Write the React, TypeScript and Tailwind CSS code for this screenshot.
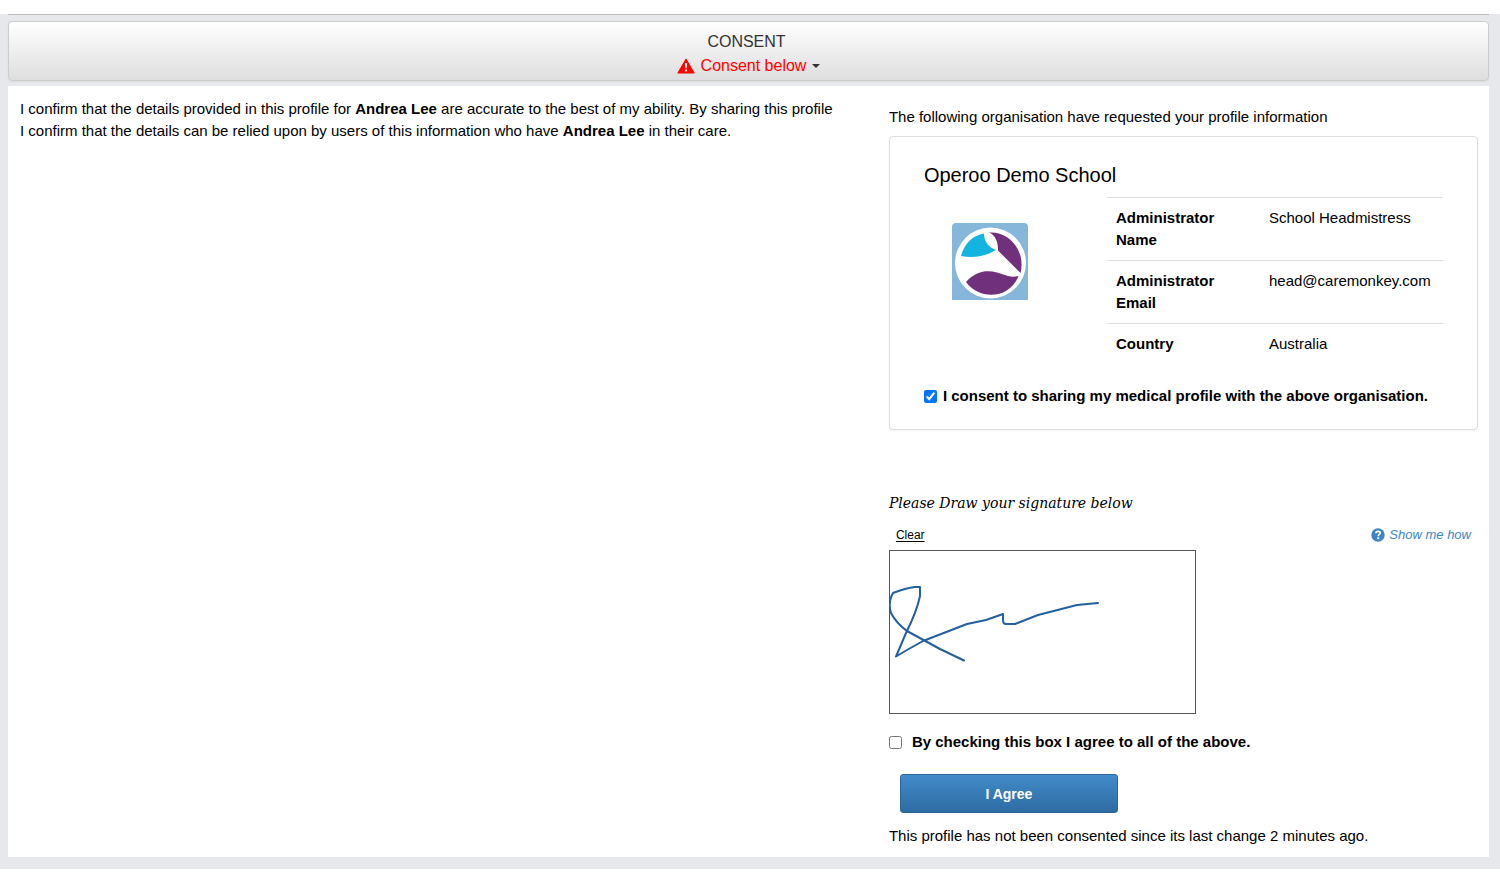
import React from "react";

const details = [
  { label: "Administrator Name", value: "School Headmistress" },
  { label: "Administrator Email", value: "head@caremonkey.com" },
  { label: "Country", value: "Australia" },
];

const WarningIcon: React.FC = () => (
  <svg viewBox="0 0 18 16" className="w-[18px] h-4" aria-hidden="true">
    <path d="M9 1.2 17 15H1Z" fill="#f00" stroke="#f00" strokeWidth="1.2" strokeLinejoin="round" />
    <path d="M7.8 5.2h2.4l-.5 5H8.3ZM7.9 11.4h2.2v2H7.9Z" fill="#fff" />
  </svg>
);

const HelpIcon: React.FC = () => (
  <svg viewBox="0 0 14 14" className="w-3.5 h-3.5" aria-hidden="true">
    <circle cx="7" cy="7" r="6.7" fill="#3d85c6" />
    <path d="M4.9 5.3C4.9 3.9 5.8 3.3 7.1 3.3S9.3 4 9.3 5.1C9.3 6.5 7.2 6.4 7.2 8.2" fill="none" stroke="#fff" strokeWidth="1.7" />
    <path d="M6.2 9.3h2v1.8h-2Z" fill="#fff" />
  </svg>
);

const SchoolLogo: React.FC = () => (
  <svg viewBox="0 0 76 77" className="w-[76px] h-[77px]" role="img" aria-label="Operoo Demo School logo">
    <path d="M4 0h68q4 0 4 4v73H0V4q0-4 4-4Z" fill="#86b7da" />
    <circle cx="38.5" cy="40" r="35.5" fill="#fff" />
    <path d="M9 33C12 21 21 12 32 10.5C32 18 36 24 44 27C33 34 20 35 9 33Z" fill="#14b4e1" />
    <path d="M37 9.5C58 8 74 29 68.5 50L46 27.5C46 18 43 12 37 9.5Z" fill="#71307b" />
    <path d="M14 59C29 43 43 49 53 52C58 54 62 54 66.5 53C57 77 27 77 14 59Z" fill="#71307b" />
  </svg>
);

const Signature: React.FC = () => (
  <svg
    viewBox="0 0 305 162"
    className="block w-full h-[162px]"
    fill="none"
    stroke="#245f9f"
    strokeWidth="2"
    strokeLinecap="round"
    strokeLinejoin="round"
    role="img"
    aria-label="Signature"
  >
    <path d="M74 109.5 50 98 17 80C9 74 4 68 1 62Q-2 52 2 44L3 42Q16 37 25 36H30V45Q27 60 16 82L6 105.5L17 99 33 90 77 73 96 69 113 63V69Q113 73 116 73H125L148 64 187 54 208 52" />
  </svg>
);

const App: React.FC = () => {
  return (
    <div className="bg-white pt-3.5 font-['Liberation_Sans',Arial,sans-serif] text-[15px] leading-[22px] text-black">
      <main className="bg-[#e7e8ec] pl-2 pr-[11px] pb-3">
        <div className="border-t border-[#bbb] pt-1.5">
          <button
            type="button"
            className="flex w-full flex-col items-center rounded border border-[#ccc] bg-linear-to-b from-white to-[#dedede] pt-2 pb-0.5 text-base leading-6 text-[#333] shadow-xs"
          >
            <span className="pr-1">CONSENT</span>
            <span className="flex items-center gap-1.5 text-[#f00]">
              <WarningIcon />
              Consent below
              <span className="border-x-4 border-t-4 border-x-transparent border-t-[#333]" />
            </span>
          </button>
        </div>

        <section className="mt-[5px] grid grid-cols-[minmax(0,7fr)_minmax(0,5fr)] bg-white pb-2.5">
          <p className="pl-3 pr-8 pt-3">
            I confirm that the details provided in this profile for <b>Andrea Lee</b> are accurate to the best
            of my ability. By sharing this profile I confirm that the details can be relied upon by users of
            this information who have <b>Andrea Lee</b> in their care.
          </p>

          <div className="pl-[17px] pr-[11px] pt-5">
            <p>The following organisation have requested your profile information</p>

            <div className="mt-2 rounded border border-[#ddd] px-[34px] pt-6 pb-[21px] shadow-xs">
              <h2 className="text-xl leading-7">Operoo Demo School</h2>
              <div className="mt-2 flex">
                <div className="flex-1 pl-7 pt-[26px]">
                  <SchoolLogo />
                </div>
                <table className="w-[336px] table-fixed border-collapse text-left">
                  <tbody>
                    {details.map((row) => (
                      <tr key={row.label} className="border-t border-[#ddd] align-top">
                        <th scope="row" className="w-[153px] py-[9px] pl-[9px] pr-8 font-bold">
                          {row.label}
                        </th>
                        <td className="py-[9px] pl-[9px]">{row.value}</td>
                      </tr>
                    ))}
                  </tbody>
                </table>
              </div>
              <label className="mt-5 flex items-center gap-1.5 leading-6 font-bold whitespace-nowrap">
                <input type="checkbox" defaultChecked className="h-[13px] w-[13px]" />
                I consent to sharing my medical profile with the above organisation.
              </label>
            </div>

            <p className="mt-[62px] font-['DejaVu_Serif',serif] text-sm leading-[22px] italic">
              Please Draw your signature below
            </p>
            <div className="mt-2.5 flex items-center justify-between px-[7px]">
              <button type="button" className="text-xs leading-[22px] underline underline-offset-2">
                Clear
              </button>
              <a href="#" className="flex items-center gap-1 text-[13px] leading-[22px] text-[#3d85c6] italic">
                <HelpIcon />
                Show me how
              </a>
            </div>
            <div className="mt-1 w-[307px] border border-[#555]">
              <Signature />
            </div>

            <label className="mt-4 flex items-center gap-2.5 leading-6 font-bold">
              <input type="checkbox" className="h-[13px] w-[13px]" />
              By checking this box I agree to all of the above.
            </label>
            <button
              type="button"
              className="mt-5 ml-[11px] block h-[39px] w-[218px] rounded-[3px] border border-[#2b669a] bg-linear-to-b from-[#428bca] to-[#2d6ca2] text-sm font-bold text-white"
            >
              I Agree
            </button>
            <p className="mt-3">This profile has not been consented since its last change 2 minutes ago.</p>
          </div>
        </section>
      </main>
    </div>
  );
};

export default App;
